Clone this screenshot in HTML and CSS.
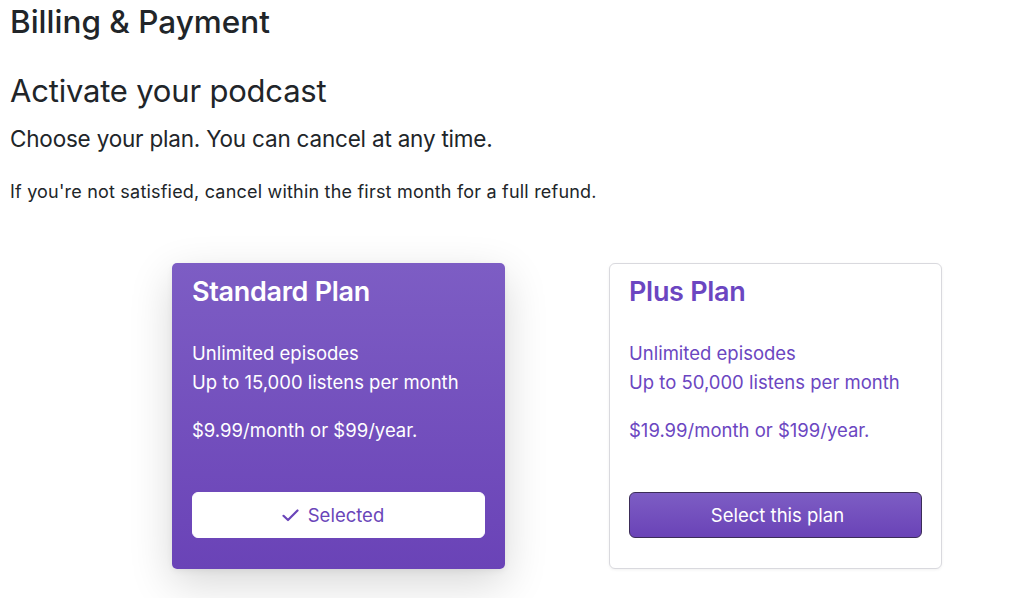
FILE: index.html
```html
<!DOCTYPE html>
<html lang="en">
<head>
<meta charset="utf-8">
<title>Billing &amp; Payment</title>
<link rel="stylesheet" href="styles.css">
</head>
<body>
<main class="page">
  <h1 class="page-title">Billing &amp; Payment</h1>
  <h2 class="section-title">Activate your podcast</h2>
  <p class="lead">Choose your plan. You can cancel at any time.</p>
  <p class="note">If you're not satisfied, cancel within the first month for a full refund.</p>

  <div class="plans">
    <section class="plan plan-selected">
      <h3 class="plan-name">Standard Plan</h3>
      <ul class="plan-features">
        <li>Unlimited episodes</li>
        <li>Up to 15,000 listens per month</li>
      </ul>
      <p class="plan-price">$9.99/month or $99/year.</p>
      <button class="btn btn-selected" type="button">
        <svg class="check" width="17" height="13" viewBox="0 0 17 13" aria-hidden="true"><path d="M1.5 6.8 L6 11 L15.5 1.5" fill="none" stroke="currentColor" stroke-width="2.2" stroke-linecap="round" stroke-linejoin="round"/></svg>
        <span>Selected</span>
      </button>
    </section>

    <section class="plan plan-other">
      <h3 class="plan-name">Plus Plan</h3>
      <ul class="plan-features">
        <li>Unlimited episodes</li>
        <li>Up to 50,000 listens per month</li>
      </ul>
      <p class="plan-price">$19.99/month or $199/year.</p>
      <button class="btn btn-primary" type="button">Select this plan</button>
    </section>
  </div>
</main>
</body>
</html>
```

FILE: styles.css
```css
* { box-sizing: border-box; }

html, body {
  margin: 0;
  padding: 0;
  background: #ffffff;
}

body {
  font-family: Inter, "Noto Sans", "Liberation Sans", sans-serif;
  color: #212529;
  -webkit-font-smoothing: antialiased;
}

.page {
  padding: 3px 10px 40px 10px;
}

.page-title {
  margin: 0;
  font-size: 31.5px;
  font-weight: 500;
  line-height: 38px;
  letter-spacing: 0;
}

.section-title {
  margin: 31px 0 0 0;
  font-size: 31px;
  font-weight: 400;
  line-height: 38px;
  letter-spacing: -0.2px;
}

.lead {
  margin: 13.5px 0 0 0;
  font-size: 22.5px;
  line-height: 30px;
  letter-spacing: -0.2px;
}

.note {
  margin: 25px 0 0 0;
  font-size: 18px;
  line-height: 26px;
  letter-spacing: 0.2px;
}

.plans {
  display: flex;
  gap: 104px;
  margin-top: 58px;
  padding-left: 162px;
}

.plan {
  width: 333px;
  height: 306px;
  border-radius: 5px;
  padding: 12px 20px 31px 20px;
  display: flex;
  flex-direction: column;
}

.plan-selected {
  background: linear-gradient(180deg, #7d5dc4 0%, #6a43b7 100%);
  color: #ffffff;
  box-shadow: 0 14px 44px rgba(0, 0, 0, 0.16), 0 2px 6px rgba(0, 0, 0, 0.06);
}

.plan-other {
  background: #ffffff;
  border: 1px solid #d9d9de;
  border-radius: 6px;
  color: #6b46c1;
  padding: 11px 19px 30px 19px;
  box-shadow: 0 1px 3px rgba(0, 0, 0, 0.06);
}

.plan-name {
  margin: 0;
  font-size: 27px;
  font-weight: 600;
  line-height: 34px;
  letter-spacing: -0.3px;
}

.plan-features {
  list-style: none;
  margin: 30px 0 0 0;
  padding: 0;
  font-size: 18.5px;
  line-height: 29px;
}

.plan-price {
  margin: 19px 0 0 0;
  font-size: 18.5px;
  line-height: 29px;
  letter-spacing: 0;
}

.btn {
  margin-top: auto;
  height: 46px;
  width: 100%;
  border-radius: 6px;
  font-family: inherit;
  font-size: 18.5px;
  display: flex;
  align-items: center;
  justify-content: center;
  gap: 9px;
  cursor: pointer;
}

.btn-selected {
  background: #ffffff;
  border: 1px solid #ffffff;
  color: #6a45b9;
  padding-right: 17px;
}

.btn-selected .check {
  margin-top: 1px;
}

.btn-primary {
  background: linear-gradient(180deg, #7d5dc4 0%, #6a43b7 100%);
  border: 1px solid #3b2c58;
  color: #ffffff;
  padding-left: 10px;
}
```
